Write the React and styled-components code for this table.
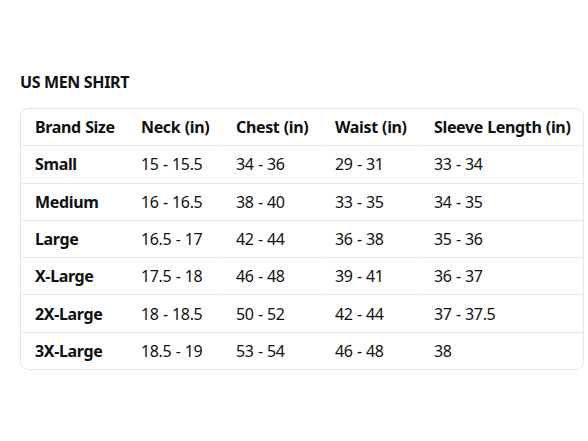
import React from "react";
import styled, { createGlobalStyle } from "styled-components";

const Global = createGlobalStyle`
  html, body { margin: 0; padding: 0; background: #fff; }
  body { font-family: "Noto Sans", "Open Sans", Arial, sans-serif; color: #0f1111; }
`;

const Page = styled.div`
  width: 588px;
  height: 441px;
  padding: 72px 0 0 20px;
  box-sizing: border-box;
`;

const Title = styled.h2`
  margin: 0 0 16px;
  font-size: 16px;
  line-height: 20px;
  font-weight: 700;
  letter-spacing: -0.35px;
`;

const Frame = styled.div`
  width: 564px;
  box-sizing: border-box;
  border: 1px solid #e3e6e6;
  border-radius: 8px;
  overflow: hidden;
`;

const Table = styled.table`
  border-collapse: separate;
  border-spacing: 0;
  width: 100%;
  table-layout: fixed;
`;

const Row = styled.tr`
  & > * {
    box-sizing: border-box;
    height: 37.3px;
    border-bottom: 1px solid #e7e9e9;
  }
  tbody &:last-child > * {
    height: 36.3px;
    border-bottom: 0;
  }
`;

const Cell = styled.td`
  padding: 0 0 0 14px;
  font-size: 16px;
  letter-spacing: -0.35px;
  word-spacing: 0.5px;
  font-weight: ${(p) => (p.$bold ? 700 : 400)};
  text-align: left;
  white-space: nowrap;
  border-left: ${(p) => (p.$split ? "1px solid #fff" : "0")};
`;

const widths = [106, 94, 99, 99, 164];
const head = ["Brand Size", "Neck (in)", "Chest (in)", "Waist (in)", "Sleeve Length (in)"];
const rows = [
  ["Small", "15 - 15.5", "34 - 36", "29 - 31", "33 - 34"],
  ["Medium", "16 - 16.5", "38 - 40", "33 - 35", "34 - 35"],
  ["Large", "16.5 - 17", "42 - 44", "36 - 38", "35 - 36"],
  ["X-Large", "17.5 - 18", "46 - 48", "39 - 41", "36 - 37"],
  ["2X-Large", "18 - 18.5", "50 - 52", "42 - 44", "37 - 37.5"],
  ["3X-Large", "18.5 - 19", "53 - 54", "46 - 48", "38"],
];

export default function App() {
  return (
    <>
      <Global />
      <Page>
        <Title>US MEN SHIRT</Title>
        <Frame>
          <Table>
            <colgroup>
              {widths.map((w, i) => (
                <col key={i} style={{ width: w }} />
              ))}
            </colgroup>
            <thead>
              <Row>
                {head.map((h, i) => (
                  <Cell as="th" key={i} $bold $split={i >= 2}>
                    {h}
                  </Cell>
                ))}
              </Row>
            </thead>
            <tbody>
              {rows.map((r, ri) => (
                <Row key={ri}>
                  {r.map((c, i) => (
                    <Cell key={i} $bold={i === 0} $split={i >= 2}>
                      {c}
                    </Cell>
                  ))}
                </Row>
              ))}
            </tbody>
          </Table>
        </Frame>
      </Page>
    </>
  );
}
